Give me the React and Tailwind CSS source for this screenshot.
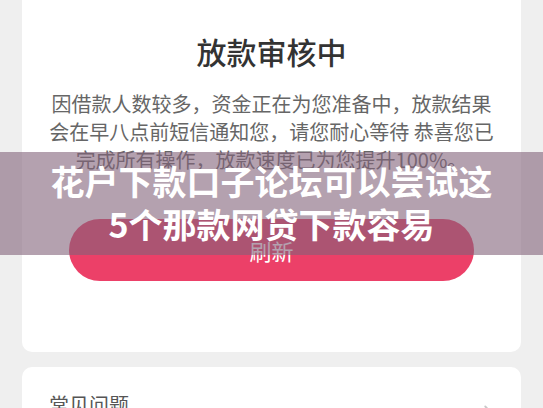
import React from 'react'
import { ChevronRight } from 'lucide-react'

const App = () => {
  return (
    <div
      className="relative w-[543px] h-[408px] overflow-hidden bg-[#efefef] px-[22px]"
      style={{ fontFamily: '"Noto Sans CJK SC", "Noto Sans", sans-serif' }}
    >
      {/* Status card */}
      <div className="bg-white rounded-b-[10px] pt-[32px] pb-[71px] flex flex-col items-center">
        <h2 className="text-[30px] leading-[39px] text-[#333333] font-medium">放款审核中</h2>
        <p className="mt-[19px] text-[20px] leading-[28px] text-[#666666] text-center whitespace-nowrap">
          因借款人数较多，资金正在为您准备中，放款结果
          <br />
          会在早八点前短信通知您，请您耐心等待 恭喜您已
          <br />
          完成所有操作，放款速度已为您提升100%。
        </p>
        <button className="mt-[45px] w-[405px] h-[62px] rounded-full bg-[#ec4068] text-white text-[22px]">
          刷新
        </button>
      </div>

      {/* FAQ card */}
      <div className="mt-[15px] bg-white rounded-t-[10px] pt-[24px] pl-[27px] pr-[22px] h-[60px] flex items-start justify-between">
        <span className="text-[20px] leading-[28px] text-[#555555]">常见问题</span>
        <ChevronRight className="w-[22px] h-[22px] mt-[10px] text-[#c8c8c8]" strokeWidth={2} />
      </div>

      {/* Caption band */}
      <div className="absolute left-0 right-0 top-[152px] h-[103px] bg-[rgba(130,98,122,0.6)] flex items-center justify-center pb-[4px]">
        <div className="text-white text-[34px] leading-[43px] font-bold text-center whitespace-nowrap">
          花户下款口子论坛可以尝试这
          <br />
          5个那款网贷下款容易
        </div>
      </div>
    </div>
  )
}

export default App
